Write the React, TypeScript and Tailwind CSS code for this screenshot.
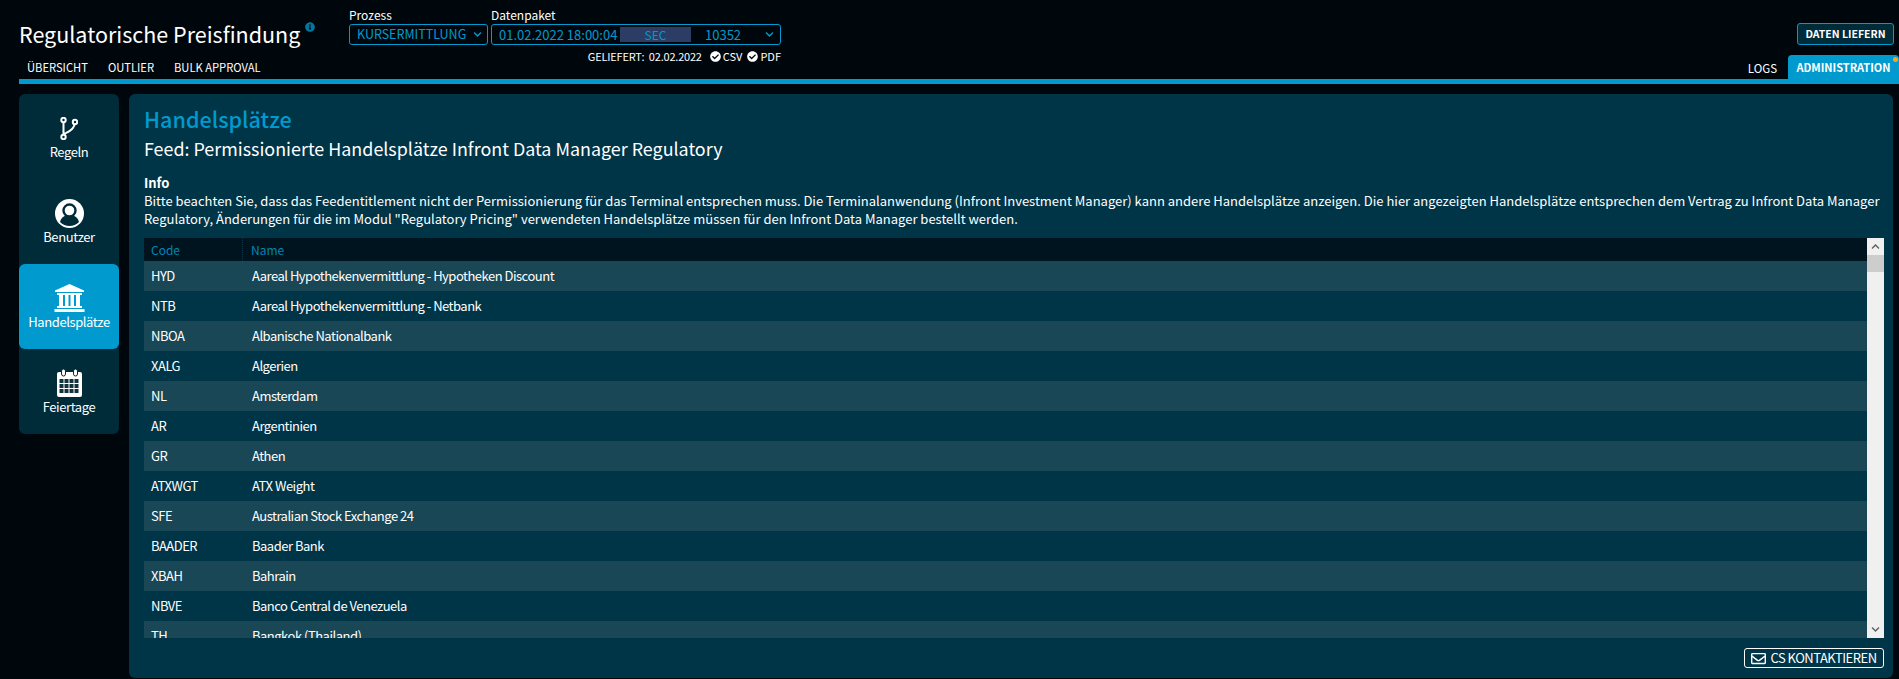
import type { ReactNode } from "react";
import { FaCheckCircle, FaChevronDown, FaChevronUp, FaInfoCircle, FaRegEnvelope } from "react-icons/fa";

const venues = [
  ["HYD", "Aareal Hypothekenvermittlung - Hypotheken Discount"],
  ["NTB", "Aareal Hypothekenvermittlung - Netbank"],
  ["NBOA", "Albanische Nationalbank"],
  ["XALG", "Algerien"],
  ["NL", "Amsterdam"],
  ["AR", "Argentinien"],
  ["GR", "Athen"],
  ["ATXWGT", "ATX Weight"],
  ["SFE", "Australian Stock Exchange 24"],
  ["BAADER", "Baader Bank"],
  ["XBAH", "Bahrain"],
  ["NBVE", "Banco Central de Venezuela"],
  ["TH", "Bangkok (Thailand)"],
];

function BranchIcon() {
  return (
    <svg width="18" height="23" viewBox="0 0 18 23" fill="none" stroke="white" strokeWidth="2">
      <circle cx="3.5" cy="3" r="2.2" />
      <circle cx="15" cy="5" r="2.2" />
      <circle cx="3.5" cy="20" r="2.2" />
      <path d="M3.5 5.2v12.6M14.6 7.2c-.6 4-3 5.6-5.6 7.2-2.2 1.3-4.6 2-5 3.4" />
    </svg>
  );
}

function UserIcon() {
  return (
    <svg width="29" height="29" viewBox="0 0 29 29">
      <circle cx="14.5" cy="14.5" r="14.5" fill="white" />
      <circle cx="14.5" cy="11.5" r="6" fill="none" stroke="#002b39" strokeWidth="2.4" />
      <path
        d="M5 23c1-4 3.500-6 6-6.500 2 1.500 5 1.500 7 0 2.500.5 5 2.500 6 6.500-2.500 2.500-6 4-9.500 4s-7-1.500-9.500-4z"
        fill="#002b39"
      />
    </svg>
  );
}

function BankIcon() {
  return (
    <svg width="31" height="28" viewBox="0 0 31 28" fill="white">
      <path d="M15.500 0 30 6.500V8H1V6.500z" />
      <rect x="3" y="9" width="25" height="2" />
      <rect x="5" y="11" width="4" height="11" />
      <rect x="11" y="11" width="3.500" height="11" />
      <rect x="16.500" y="11" width="3.500" height="11" />
      <rect x="22" y="11" width="4" height="11" />
      <rect x="3" y="22" width="25" height="2" />
      <rect x="0.500" y="25" width="30" height="3" />
    </svg>
  );
}

function CalendarIcon() {
  return (
    <svg width="27" height="28" viewBox="0 0 27 28">
      <rect x="1" y="3" width="25" height="25" rx="2" fill="white" />
      <rect x="5.500" y="0" width="4" height="7" rx="2" fill="white" stroke="#002b39" strokeWidth="1" />
      <rect x="17.500" y="0" width="4" height="7" rx="2" fill="white" stroke="#002b39" strokeWidth="1" />
      {[10, 15, 20].map((y) =>
        [3, 8, 13, 18].map((x) => (
          <rect key={`${x}-${y}`} x={x + 0.5} y={y} width="4" height="4" fill="#12323e" />
        )),
      )}
    </svg>
  );
}

function SideItem({ icon, label, active }: { icon: ReactNode; label: string; active?: boolean }) {
  return (
    <div
      className={`flex h-[85px] flex-col items-center pt-[20px] text-[13px] leading-[18px] tracking-[-0.4px] text-white ${
        active ? "rounded-[6px] bg-[#009ace]" : ""
      }`}
    >
      <div className="mb-[1px] flex h-[28px] items-center justify-center">{icon}</div>
      {label}
    </div>
  );
}

export default function App() {
  return (
    <div
      className="flex h-[679px] w-[1899px] flex-col overflow-hidden bg-[#00070c] text-white"
      style={{ fontFamily: '"Noto Sans CJK SC", "Noto Sans", sans-serif' }}
    >
      <header className="relative h-[84px] shrink-0 pl-[19px] pr-[5px]">
        <div className="flex h-[60px] items-start">
          <div className="mt-[19px] w-[330px] shrink-0 text-[21.5px] leading-[30px]">
            Regulatorische Preisfindung
            <FaInfoCircle className="relative top-[-10px] ml-[5px] inline text-[10px] text-[#00779f]" />
          </div>
          <div className="mt-[7px] w-[139px]">
            <div className="text-[12px] leading-[15px]">Prozess</div>
            <div className="mt-[2px] flex h-[21px] items-center justify-between rounded-[3px] border border-[#009ace] pl-[7px] pr-[5px] text-[12.5px] text-[#009ace]">
              KURSERMITTLUNG
              <FaChevronDown className="text-[9px]" />
            </div>
          </div>
          <div className="ml-[3px] mt-[7px] w-[290px]">
            <div className="text-[12px] leading-[15px]">Datenpaket</div>
            <div className="mt-[2px] flex h-[21px] items-center rounded-[3px] border border-[#009ace] pl-[7px] pr-[6px] text-[13px] text-[#009ace]">
              <span className="w-[121px]">01.02.2022 18:00:04</span>
              <span className="h-[15px] w-[71px] bg-[#2b3c65] text-center text-[12px] leading-[15px]">SEC</span>
              <span className="ml-[14px] flex-1">10352</span>
              <FaChevronDown className="text-[9px]" />
            </div>
            <div className="mt-[4px] flex items-center justify-end gap-[2px] text-[11px] leading-[14px]">
              <span className="mr-[6px] tracking-[-0.2px]">GELIEFERT:&nbsp; 02.02.2022</span>
              <FaCheckCircle className="text-[11px]" />
              <span className="mr-[3px]">CSV</span>
              <FaCheckCircle className="text-[11px]" />
              <span>PDF</span>
            </div>
          </div>
          <div className="ml-auto mt-[23px] flex h-[22px] w-[97px] items-center justify-center rounded-[3px] border border-[#009ace] bg-[#002b39] text-[10.5px] font-bold">
            DATEN LIEFERN
          </div>
        </div>
        <nav className="flex h-[15px] items-end gap-[20px] pl-[8px] text-[11.2px] leading-[15px]">
          <span>ÜBERSICHT</span>
          <span>OUTLIER</span>
          <span>BULK APPROVAL</span>
        </nav>
        <div className="absolute bottom-0 left-[19px] right-0 h-[5px] bg-[#009ace]" />
        <div className="absolute bottom-0 right-0 flex items-end">
          <span className="mb-[8px] mr-[11px] text-[11.5px] leading-[15px]">LOGS</span>
          <span className="relative flex h-[29px] w-[111px] items-center justify-center rounded-t-[4px] bg-[#009ace] pb-[4px] text-[11px] font-bold">
            ADMINISTRATION
            <span className="absolute right-[1px] top-[2px] h-[5px] w-[5px] rounded-full bg-[#f5a623]" />
          </span>
        </div>
      </header>

      <main className="flex min-h-0 flex-1 gap-[10px] pb-[1px] pl-[19px] pr-[6px] pt-[10px]">
        <aside className="h-[340px] w-[100px] shrink-0 rounded-[6px] bg-[#002b39]">
          <SideItem icon={<BranchIcon />} label="Regeln" />
          <SideItem icon={<UserIcon />} label="Benutzer" />
          <SideItem icon={<BankIcon />} label="Handelsplätze" active />
          <SideItem icon={<CalendarIcon />} label="Feiertage" />
        </aside>

        <section className="flex min-w-0 flex-1 flex-col rounded-[6px] bg-[#003548] pl-[15px] pr-[9px] pt-[10px]">
          <h1 className="text-[21.6px] font-medium leading-[30px] text-[#009ace]">Handelsplätze</h1>
          <h2 className="mt-[1px] text-[17.9px] leading-[27px]">Feed: Permissionierte Handelsplätze Infront Data Manager Regulatory</h2>
          <div className="mt-[12px] text-[13px] leading-[18px]">
            <div className="font-bold">Info</div>
            <p>
              Bitte beachten Sie, dass das Feedentitlement nicht der Permissionierung für das Terminal entsprechen muss. Die Terminalanwendung (Infront Investment Manager) kann andere Handelsplätze anzeigen. Die hier angezeigten Handelsplätze entsprechen dem Vertrag zu Infront Data Manager Regulatory, Änderungen für die im Modul "Regulatory Pricing" verwendeten Handelsplätze müssen für den Infront Data Manager bestellt werden.
            </p>
          </div>
          <div className="mt-[10px] flex h-[400px] shrink-0 overflow-hidden">
            <div className="min-w-0 flex-1 overflow-hidden">
              <div className="flex h-[23px] items-center bg-[#00141f] text-[12px] text-[#0085b5]">
                <span className="w-[99px] border-r border-dotted border-[#0c3445] pl-[7px] leading-[23px]">Code</span>
                <span className="pl-[8px]">Name</span>
              </div>
              {venues.map(([code, name], index) => (
                <div
                  key={code}
                  className={`flex h-[30px] items-center text-[13px] tracking-[-0.5px] ${index % 2 === 0 ? "bg-[#194756]" : "bg-[#003548]"}`}
                >
                  <span className="w-[100px] pl-[7px]">{code}</span>
                  <span className="pl-[8px]">{name}</span>
                </div>
              ))}
            </div>
            <div className="flex w-[17px] shrink-0 flex-col bg-[#f0f0f0] text-[#606060]">
              <div className="flex h-[17px] items-center justify-center">
                <FaChevronUp className="text-[9px]" />
              </div>
              <div className="h-[17px] bg-[#cdcdcd]" />
              <div className="flex-1" />
              <div className="flex h-[17px] items-center justify-center">
                <FaChevronDown className="text-[9px]" />
              </div>
            </div>
          </div>
          <div className="mt-[10px] flex justify-end">
            <div className="flex h-[20px] w-[140px] items-center justify-center gap-[4px] rounded-[3px] border border-white text-[13px] tracking-[-0.5px]">
              <FaRegEnvelope className="text-[15px]" />
              CS KONTAKTIEREN
            </div>
          </div>
        </section>
      </main>
    </div>
  );
}
